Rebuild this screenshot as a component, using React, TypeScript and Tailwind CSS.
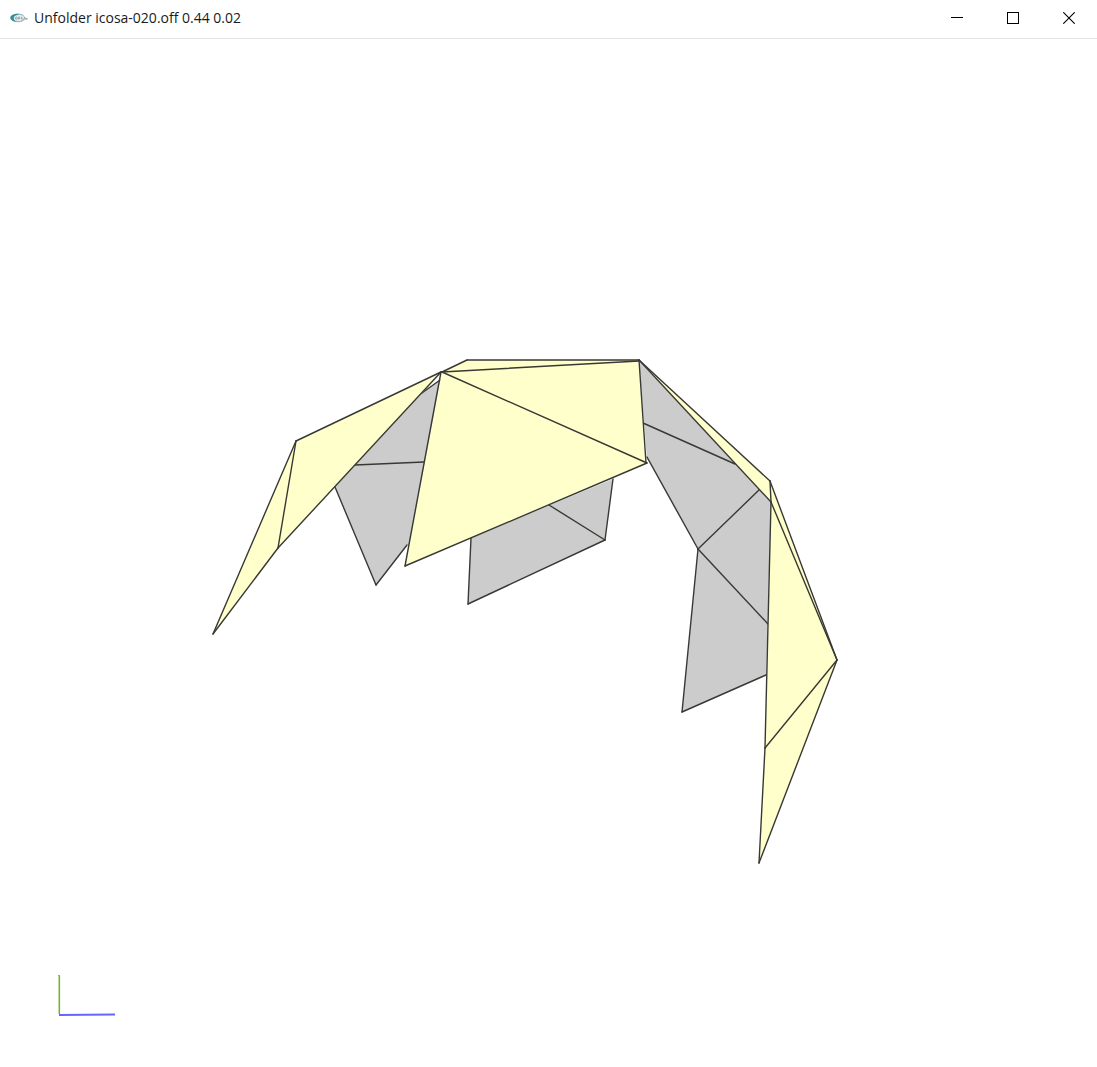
type Face = { points: string; side: "front" | "back" };
type Edge = [number, number, number, number];

const backFaces: Face[] = [
  { points: "440,380 424,391 335,487 376,585 407,545 412,545", side: "back" },
  { points: "471,538 613,479 605,540 468,604", side: "back" },
  { points: "639,361 771,502 766,675 682,712 698,549 647,459", side: "back" },
];

const frontFaces: Face[] = [
  { points: "442,372 296,441 213,634 278,548", side: "front" },
  { points: "442,372 467,360 638,360 646,463 405,566", side: "front" },
  { points: "639,360 770,481 771,502", side: "front" },
  { points: "770,481 837,660 759,863 765,748 771,502", side: "front" },
];

const backEdges: Edge[] = [
  [440, 380, 422, 393],
  [355, 465, 424, 462],
  [335, 487, 376, 585],
  [376, 585, 407, 545],
  [471, 538, 468, 604],
  [468, 604, 605, 540],
  [605, 540, 613, 479],
  [549, 505, 605, 540],
  [643, 423, 735, 464],
  [647, 457, 698, 549],
  [698, 549, 759, 490],
  [698, 549, 768, 624],
  [698, 549, 682, 712],
  [682, 712, 766, 675],
];

const frontEdges: Edge[] = [
  [441, 372, 296, 441],
  [296, 441, 213, 634],
  [213, 634, 278, 548],
  [278, 548, 441, 372],
  [296, 441, 278, 548],
  [442, 372, 467, 360],
  [467, 360, 639, 360],
  [442, 372, 639, 361],
  [442, 372, 647, 463],
  [441, 372, 405, 566],
  [405, 566, 647, 463],
  [639, 360, 646, 463],
  [639, 360, 770, 481],
  [639, 360, 771, 502],
  [770, 481, 771, 502],
  [770, 481, 837, 660],
  [771, 502, 837, 660],
  [771, 502, 765, 748],
  [765, 748, 837, 660],
  [765, 748, 759, 863],
  [759, 863, 837, 660],
];

function Faces({ faces }: { faces: Face[] }) {
  return (
    <>
      {faces.map((f) => (
        <polygon
          key={f.points}
          points={f.points}
          className={f.side === "front" ? "fill-[#ffffcc]" : "fill-[#cccccc]"}
        />
      ))}
    </>
  );
}

function Edges({ edges }: { edges: Edge[] }) {
  return (
    <g stroke="#383834" strokeWidth="1.4" strokeLinecap="round">
      {edges.map(([x1, y1, x2, y2]) => (
        <line key={`${x1},${y1},${x2},${y2}`} x1={x1} y1={y1} x2={x2} y2={y2} />
      ))}
    </g>
  );
}

function AppIcon() {
  return (
    <svg viewBox="0 0 18 12" className="h-3 w-[18px] shrink-0" aria-hidden="true">
      <ellipse cx="8" cy="6" rx="6.6" ry="3.8" fill="#e4ecee" stroke="#a4bdc2" strokeWidth="0.8" />
      <path d="M8 1.8C3.6 1.7 0.2 3.4 0.3 5.8 0.4 8.4 4 10 8 9.8 5.4 9.2 3.6 8 3.7 6 3.8 4 5.6 3 9.5 2.7Z" fill="#2f8f94" />
      <path d="M8 1.8C11 1.5 13.4 2.6 14.4 4.4 12.8 3.2 10.6 2.7 8 2.9Z" fill="#8cb2b8" />
      <path d="M6 9.2C9 10 12 9.4 13.8 8" fill="none" stroke="#9fb5bc" strokeWidth="1" />
      <path d="M5.4 6.2C5.4 4.6 7.4 4.6 7.4 6.2 7.4 7.6 5.4 7.6 5.4 6.2ZM8.6 7.4V5.2C10.4 4.6 10.8 6.8 8.8 6.7M11.6 4.8V7H13M14 5.4L17.6 7.1M13.4 7.1H17.4" fill="none" stroke="#7f929c" strokeWidth="0.8" />
    </svg>
  );
}

const controlClass = "flex w-14 items-center justify-center hover:bg-gray-200";

function TitleBar() {
  return (
    <header className="flex h-[39px] items-stretch border-b border-[#e2e2e2] bg-white">
      <div className="flex min-w-0 flex-1 items-center gap-1.5 pb-0.5 pl-2.5">
        <AppIcon />
        <h1 className="truncate text-sm text-[#1a1a1a]">Unfolder icosa-020.off 0.44 0.02</h1>
      </div>
      <div className="flex pb-0.5">
        <button type="button" aria-label="Minimize" className={controlClass}>
          <svg viewBox="0 0 12 12" className="size-3" shapeRendering="crispEdges">
            <path d="M0 5.5H12" stroke="#000" />
          </svg>
        </button>
        <button type="button" aria-label="Maximize" className={controlClass}>
          <svg viewBox="0 0 12 12" className="size-3" shapeRendering="crispEdges">
            <rect x="0.5" y="0.5" width="11" height="11" fill="none" stroke="#000" />
          </svg>
        </button>
        <button type="button" aria-label="Close" className={controlClass}>
          <svg viewBox="0 0 12 12" className="size-3">
            <path d="M0.3 0.3L11.7 11.7M11.7 0.3L0.3 11.7" stroke="#000" strokeWidth="1.1" />
          </svg>
        </button>
      </div>
    </header>
  );
}

export default function App() {
  return (
    <div className="min-h-screen bg-white font-['Open_Sans','Noto_Sans',sans-serif]">
      <TitleBar />
      <main>
        <svg viewBox="0 39 1097 1028" className="block w-full" role="img" aria-label="Partially unfolded icosahedron">
          <Faces faces={backFaces} />
          <Edges edges={backEdges} />
          <Faces faces={frontFaces} />
          <Edges edges={frontEdges} />
          <g fill="none">
            <path d="M58.5 975V1014" stroke="#d3dca8" strokeWidth="1" />
            <path d="M59.5 976V1014" stroke="#2ed81c" strokeWidth="1.2" />
            <path d="M58 975.5H60" stroke="#f08080" strokeWidth="1" />
            <path d="M59 1015L115 1014.5" stroke="#6666ff" strokeWidth="2" />
          </g>
        </svg>
      </main>
    </div>
  );
}
